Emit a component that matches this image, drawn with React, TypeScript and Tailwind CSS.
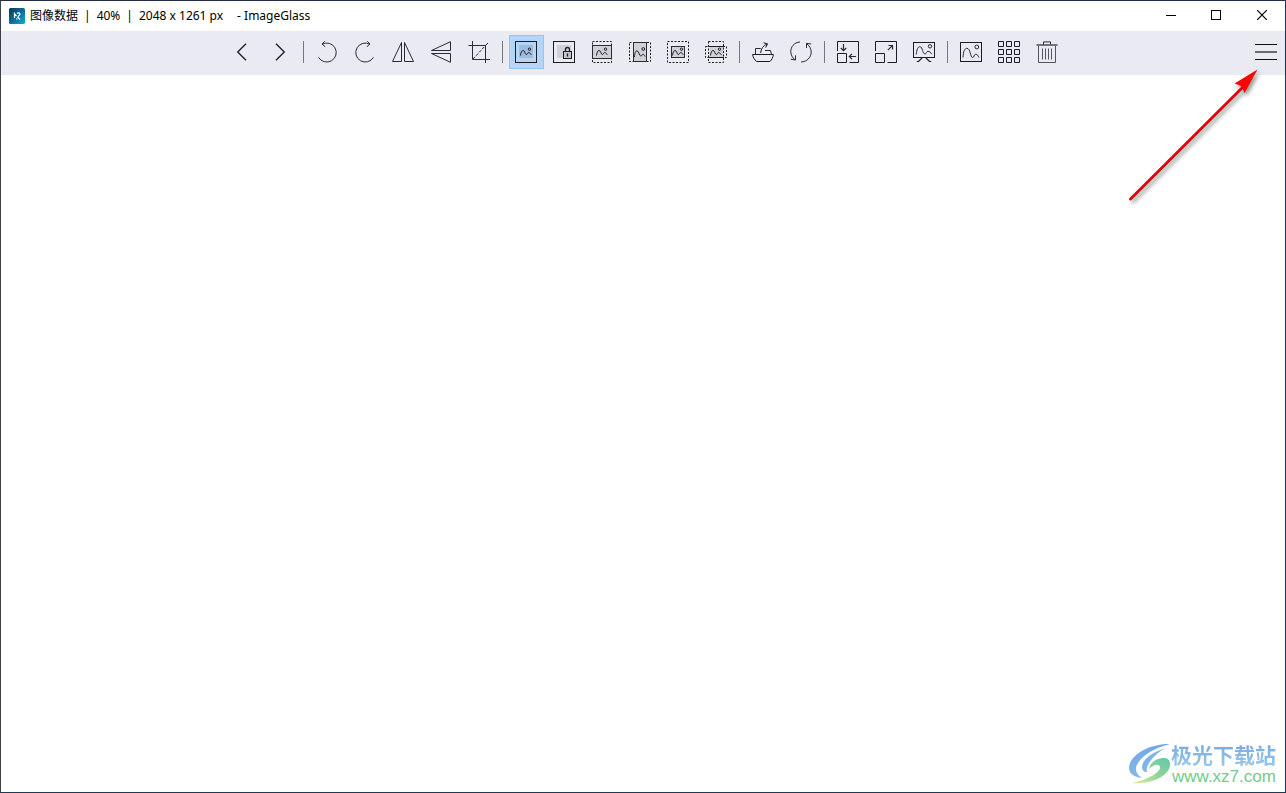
import React, { useState } from 'react';

type IconProps = { children: React.ReactNode };

const Icon: React.FC<IconProps> = ({ children }) => (
  <svg width="22" height="22" viewBox="0 0 22 22" fill="none" stroke="#2b2c33" strokeWidth="1" aria-hidden="true">
    {children}
  </svg>
);

const INK = '#1c1d22';
const SHADE = '#d0d1d6';

// Small landscape used inside the zoom mode icons
const Scene: React.FC = () => (
  <g stroke={INK}>
    <path d="M5.500 14.500c.4-3.400 1.300-5 2.600-5 2 0 1.600 4 3.200 4 1.300 0 1.100-1.900 2.300-1.900 1 0 1.800.8 2.700 2.200" />
    <circle cx="14.500" cy="8.200" r="1.200" />
  </g>
);

type Tool = { id: string; label: string; icon: React.ReactNode };

const groups: Tool[][] = [
  [
    { id: 'prev', label: 'View previous image', icon: <path d="M15 2.700 6.700 11 15 19.300" stroke={INK} strokeWidth="1.300" /> },
    { id: 'next', label: 'View next image', icon: <path d="M7 2.700 15.300 11 7 19.300" stroke={INK} strokeWidth="1.300" /> },
  ],
  [
    {
      id: 'rotate-left',
      label: 'Rotate left',
      icon: <path d="M2.500 16.300A9.500 9.500 0 1 0 6 3.300M8.700.3 6 3 9.200 5.800" />,
    },
    {
      id: 'rotate-right',
      label: 'Rotate right',
      icon: <path d="M19.500 16.300A9.500 9.500 0 1 1 16 3.300M13.300.3 16 3 12.800 5.800" />,
    },
    { id: 'flip-h', label: 'Flip horizontal', icon: <path d="M9.500 1.500v19h-9zM12.500 1.500v19h9z" /> },
    { id: 'flip-v', label: 'Flip vertical', icon: <path d="M20.500.7v8.800h-19zM20.500 21.300v-8.800h-19z" /> },
    {
      id: 'crop',
      label: 'Crop image',
      icon: (
        <>
          <path d="M4.500 0v18.500H22M.5 4.500h17V22M17 5l3-3" />
          <path d="M5 18 17.500 4.500" strokeDasharray="3 1.500" />
        </>
      ),
    },
  ],
  [
    {
      id: 'auto-zoom',
      label: 'Auto zoom',
      icon: (
        <>
          <rect x="4" y="4" width="14" height="13" fill="#93add0" fillOpacity=".65" stroke="none" />
          <rect x=".5" y=".5" width="21" height="21" stroke={INK} />
          <Scene />
        </>
      ),
    },
    {
      id: 'lock-zoom',
      label: 'Lock zoom ratio',
      icon: (
        <>
          <rect x="4" y="4" width="14" height="13" fill={SHADE} stroke="none" />
          <rect x=".5" y=".5" width="21" height="21" stroke={INK} />
          <rect x="10.500" y="10.500" width="8" height="7" stroke={INK} fill="#c4c5cb" />
          <path d="M12.500 10V8.500a2 2 0 0 1 4 0V10M14.500 12.500v3" stroke={INK} strokeWidth="1.300" />
        </>
      ),
    },
    {
      id: 'scale-width',
      label: 'Scale to width',
      icon: (
        <>
          <rect x="1.500" y=".5" width="19" height="21" strokeDasharray="2 1.500" stroke={INK} />
          <rect x="1.500" y="4.500" width="19" height="13" fill={SHADE} />
          <Scene />
        </>
      ),
    },
    {
      id: 'scale-height',
      label: 'Scale to height',
      icon: (
        <>
          <rect x=".5" y="1.500" width="21" height="19" strokeDasharray="2 1.500" stroke={INK} />
          <rect x="4.500" y="1.500" width="13" height="19" fill={SHADE} />
          <path d="M5.500 16c.2-4 1-6.200 2.500-6.200 2 0 2 5.200 3.800 5.200 1.200 0 1-1.600 2.100-1.600 1 0 1.600.9 2.300 2.200" stroke={INK} />
          <circle cx="14.300" cy="8" r="1.400" stroke={INK} />
        </>
      ),
    },
    {
      id: 'scale-fit',
      label: 'Scale to fit',
      icon: (
        <>
          <rect x=".5" y=".5" width="21" height="21" strokeDasharray="2 1.500" stroke={INK} />
          <rect x="4.500" y="5.500" width="13" height="11" fill={SHADE} />
          <Scene />
        </>
      ),
    },
    {
      id: 'scale-fill',
      label: 'Scale to fill',
      icon: (
        <>
          <rect x="4.500" y="5.500" width="14" height="11" fill={SHADE} stroke="none" />
          <rect x="3.500" y=".5" width="15" height="21" strokeDasharray="2 1.500" stroke={INK} />
          <rect x=".5" y="5.500" width="21" height="11" strokeDasharray="2 1.500" stroke={INK} />
          <path d="M3 5.500h16M3 16.500h16" stroke={INK} />
          <Scene />
        </>
      ),
    },
  ],
  [
    {
      id: 'open',
      label: 'Open file',
      icon: (
        <>
          <path d="M.6 13.500h20.800c-.4 3-1.600 5.200-3.400 7H4.500C2.400 18.500 1 16.500.6 13.500z" stroke={INK} />
          <path d="M3.500 13V7.500h5.200M13 9.500h5.500l1 4" />
          <path d="M8.700 12c.2-4.500 2.500-7.500 6.500-9M11.500 1.800l4 1-1.800 3.800" stroke={INK} />
        </>
      ),
    },
    {
      id: 'refresh',
      label: 'Refresh',
      icon: (
        <>
          <path d="M10 1C4 1.300.8 6 .8 10.500c0 3.500 1.700 6.300 4.200 8.300M.8 18.200l4.700.8v-4.700" />
          <path d="M11 21c6-.2 10.200-4.500 10.200-10 0-3.300-1.700-6-4.400-8.200M21.200 3l-4.700-.7V7" />
        </>
      ),
    },
  ],
  [
    {
      id: 'window-fit',
      label: 'Window fit',
      icon: (
        <>
          <path d="M.5 10V.5h21v21h-9M.5 12.500h9v9h-9z" stroke={INK} />
          <path d="M6.500 3v6.500M3.800 7l2.700 2.700L9.200 7M19 15.500h-6.500M15 12.800l-2.700 2.700 2.700 2.700" strokeWidth="1.200" />
        </>
      ),
    },
    {
      id: 'full-screen',
      label: 'Full screen',
      icon: (
        <>
          <path d="M.5 10V.5h21v21h-9M.5 12.500h9v9h-9z" stroke={INK} />
          <path d="M12.800 9.200l4.500-4.500M13.500 4.500h4v4" strokeWidth="1.200" />
        </>
      ),
    },
    {
      id: 'slideshow',
      label: 'Slideshow',
      icon: (
        <>
          <rect x=".5" y="1.500" width="21" height="15" stroke={INK} />
          <path d="M3.200 13.500c.6-5 1.700-7.800 3.500-7.800 3.300 0 2.500 7.300 5.300 7.300 1.500 0 1.300-2.700 2.900-2.700 1.700 0 2.600 1 3.600 2.800" />
          <circle cx="17" cy="5.300" r="1.700" />
          <path d="M9 17l-3.500 3.500H3.800M13 17l3.500 3.500h1.700" stroke={INK} strokeWidth="1.200" />
        </>
      ),
    },
  ],
  [
    {
      id: 'gallery',
      label: 'Thumbnail bar',
      icon: (
        <>
          <rect x=".5" y="1.500" width="21" height="19" stroke={INK} />
          <path d="M3 16.500C3.300 10.500 4.700 7.300 6.800 7.300c4 0 3.200 9.200 5.900 9.200 1.500 0 1.200-3.200 2.900-3.200s2.500 1.300 3.400 3.200" />
          <circle cx="16.800" cy="6" r="1.900" />
        </>
      ),
    },
    {
      id: 'checkerboard',
      label: 'Checkerboard',
      icon: (
        <path
          d="M.5.5h5v5h-5zM8.500.5h5v5h-5zM16.500.5h5v5h-5zM.5 8.500h5v5h-5zM8.500 8.500h5v5h-5zM16.500 8.500h5v5h-5zM.5 16.500h5v5h-5zM8.500 16.500h5v5h-5zM16.500 16.500h5v5h-5z"
          stroke={INK}
        />
      ),
    },
    {
      id: 'delete',
      label: 'Move to recycle bin',
      icon: (
        <>
          <path d="M.5 4h21" stroke="#73747a" strokeWidth="2" />
          <path d="M7.500 3.500V.9h7v2.600" />
          <path d="M2.500 5v16.500h17V5" stroke="#55565c" />
          <path d="M6.500 7.500v11M9.500 7.500v11M12.500 7.500v11M15.500 7.500v11" stroke="#55565c" />
        </>
      ),
    },
  ],
];

const TitleBar: React.FC = () => (
  <header className="flex h-[30px] items-center bg-white pl-2">
    <svg width="16" height="16" viewBox="0 0 16 16" aria-hidden="true">
      <defs>
        <linearGradient id="app" x1="0" y1="0" x2="1" y2="1">
          <stop offset="0" stopColor="#08365c" />
          <stop offset=".55" stopColor="#0a719c" />
          <stop offset="1" stopColor="#10b5c8" />
        </linearGradient>
      </defs>
      <rect width="16" height="16" rx="1.500" fill="url(#app)" />
      <path d="M5.500 4.500v5.500M5.500 6l2 2M8 5.500c1-1 3.200-.8 3 .7-.2 1.200-2 1.300-2 2.600M7 11h1.500M8.500 9l2.500 2.500" fill="none" stroke="#fff" strokeWidth="1.200" />
    </svg>
    <h1 className="ml-[5px] flex flex-1 gap-1.5 whitespace-pre font-['Noto_Sans','Noto_Sans_CJK_SC',sans-serif] text-[12px] leading-4 text-black">
      <span>图像数据</span>
      <span>|</span>
      <span>40%</span>
      <span>|</span>
      <span>2048 x 1261 px</span>
      <span className="pl-2">- ImageGlass</span>
    </h1>
    <button aria-label="Minimize" className="flex h-full w-11 items-center justify-center pb-0.5 hover:bg-gray-200">
      <svg width="10" height="10" stroke="#000" fill="none"><path d="M0 5.500h10" /></svg>
    </button>
    <button aria-label="Maximize" className="flex h-full w-[46px] items-center justify-center pb-0.5 hover:bg-gray-200">
      <svg width="10" height="10" stroke="#000" fill="none"><rect x=".5" y=".5" width="9" height="9" /></svg>
    </button>
    <button aria-label="Close" className="flex h-full w-[46px] items-center justify-center pb-0.5 hover:bg-red-500">
      <svg width="10" height="10" stroke="#000" fill="none"><path d="M0 0l10 10M10 0L0 10" strokeWidth="1.200" /></svg>
    </button>
  </header>
);

const Toolbar: React.FC = () => {
  const [active, setActive] = useState('auto-zoom');

  return (
    <div role="toolbar" className="grid grid-cols-[1fr_auto_1fr] bg-[#e9eaf2] pt-1 pr-px pb-1.5 pl-[5px]">
      <div className="col-start-2 flex items-center gap-[3px]">
        {groups.map((tools, i) => (
          <React.Fragment key={tools[0].id}>
            {i > 0 && <span className="mr-[3px] ml-[2px] h-[22px] w-px bg-[#77787e]" />}
            {tools.map(tool => (
              <button
                key={tool.id}
                aria-label={tool.label}
                title={tool.label}
                onClick={() => setActive(tool.id)}
                className={`flex h-[34px] w-[35px] items-center border pl-[5px] ${
                  active === tool.id ? 'border-[#96c3f0] bg-[#b5d5f7]' : 'border-transparent hover:bg-[#d5e4f5]'
                }`}
              >
                <Icon>{tool.icon}</Icon>
              </button>
            ))}
          </React.Fragment>
        ))}
      </div>
      <button aria-label="Main menu" className="flex h-[34px] w-[35px] items-center justify-self-end pl-1.5">
        <Icon>
          <path d="M0 3.500h22M0 18.500h22" stroke="#111" />
          <path d="M0 11h22" stroke="#6b6c72" strokeWidth="2" />
        </Icon>
      </button>
    </div>
  );
};

// Red pointer towards the main menu button
const Pointer: React.FC = () => (
  <svg
    width="150"
    height="145"
    viewBox="0 0 150 145"
    className="pointer-events-none absolute top-[65px] right-[15px] drop-shadow-[2px_3px_2px_rgba(40,60,40,0.55)]"
    aria-hidden="true"
  >
    <path d="M10.500 133 124 20" stroke="#e3000b" strokeWidth="2.800" strokeLinecap="round" />
    <path d="M137.500 3.500 114.500 17.500l5.500 2 2.500 2.500 2 5z" fill="#fa0505" />
  </svg>
);

const Watermark: React.FC = () => (
  <div className="flex items-center pr-[9px] pb-1.5">
    <svg width="42" height="42" viewBox="0 0 42 42" aria-hidden="true">
      <defs>
        <linearGradient id="swoosh" x1="0" y1="0" x2="0" y2="1">
          <stop offset="0" stopColor="#6fa8e6" />
          <stop offset="1" stopColor="#86b8e8" />
        </linearGradient>
        <linearGradient id="leaf" x1="0" y1="1" x2="1" y2="0">
          <stop offset="0" stopColor="#e3ec9a" />
          <stop offset=".5" stopColor="#8fd596" />
          <stop offset="1" stopColor="#62c6ae" />
        </linearGradient>
      </defs>
      <path d="M41 0C22 0 6 8 1 19c-3 8 1 14 12 15-6-4-8-9-4-15C14 11 25 4 41 0z" fill="url(#swoosh)" />
      <path d="M36 4C22 9 13 16 13 23c0 3 2 5 5 5-2-5 4-15 18-24z" fill="#80b3ea" />
      <path d="M3 39c12 1 28-2 35-11 5-6 4-14-3-14-7 0-14 4-15 11 4-4 10-6 11-2 1 5-12 13-28 16z" fill="url(#leaf)" />
    </svg>
    <div className="flex flex-col">
      <span className="bg-linear-to-b from-[#78a9e2] to-[#9ccbe8] bg-clip-text font-['Liberation_Sans','Noto_Sans_CJK_SC',sans-serif] text-[21px] leading-6 font-bold text-transparent">
        极光下载站
      </span>
      <a
        href="#"
        className="pl-px font-['Liberation_Sans','Noto_Sans_CJK_SC',sans-serif] text-[17px] leading-[18px] font-medium text-[#75c98a]"
      >
        www.xz7.com
      </a>
    </div>
  </div>
);

export default function App() {
  return (
    <div className="relative flex min-h-screen flex-col border border-t-[#252c48] border-r-[#17365a] border-b-[#1b3a54] border-l-[#3a3f48] bg-white">
      <TitleBar />
      <Toolbar />
      <main className="flex flex-1 items-end justify-end">
        <Watermark />
      </main>
      <Pointer />
    </div>
  );
}
